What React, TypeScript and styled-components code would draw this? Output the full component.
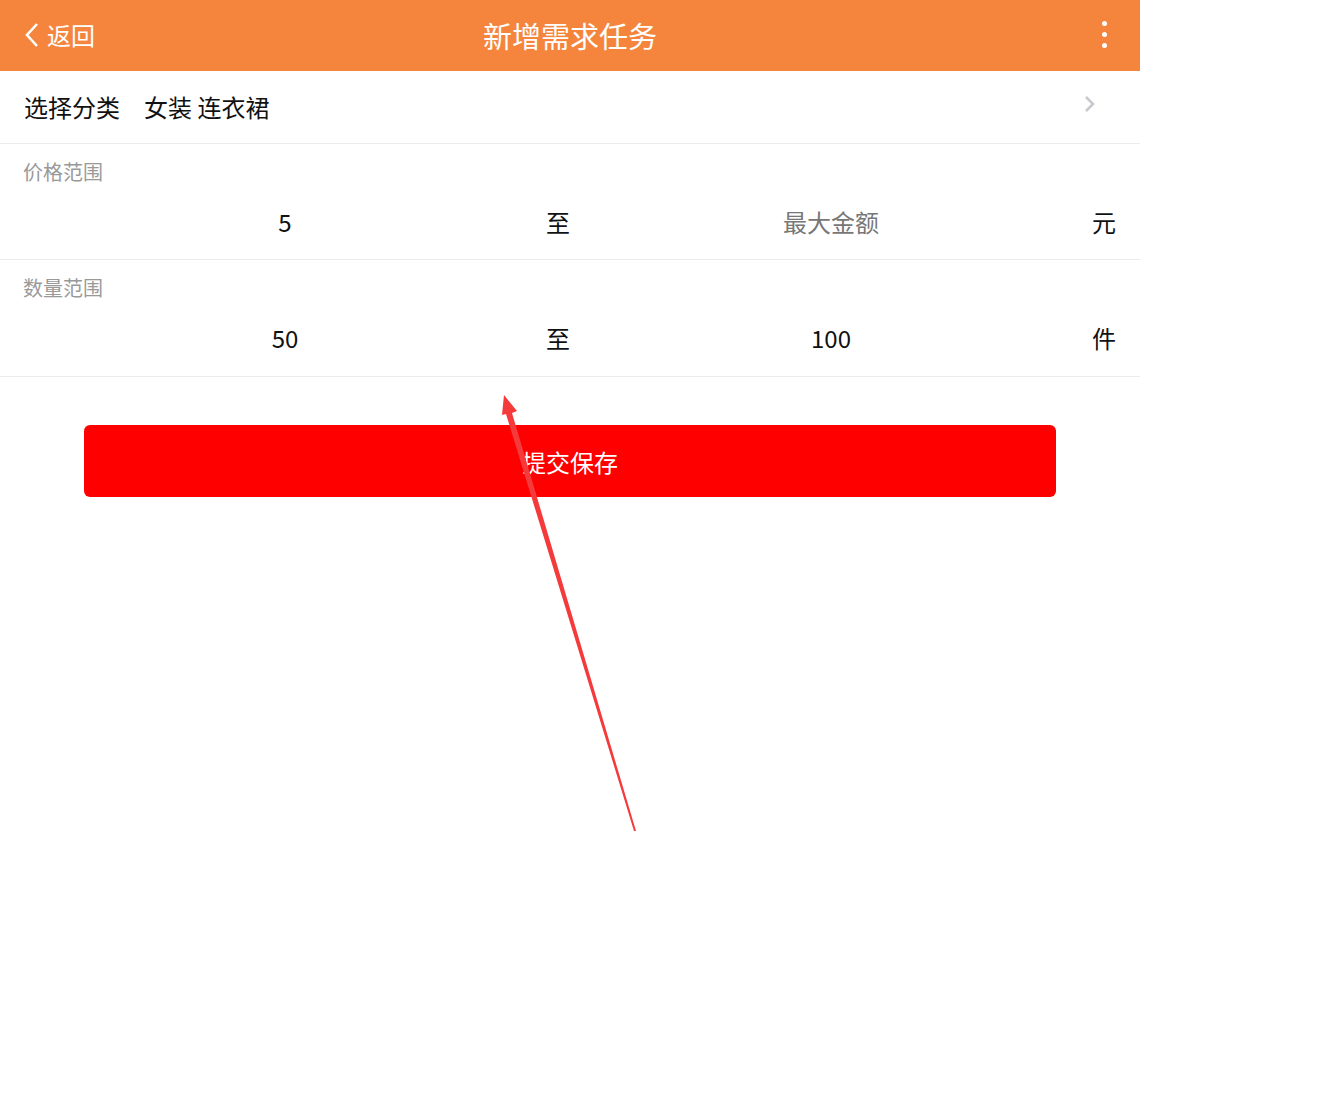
import styled, { createGlobalStyle } from "styled-components";

const Global = createGlobalStyle`
    html, body {
        margin: 0;
        padding: 0;
        background: #fff;
    }
    body {
        font-family: "Noto Sans CJK SC", "Noto Sans", sans-serif;
        color: #111;
    }
    * { box-sizing: border-box; }
`

const Page = styled.div`
    position: relative;
    width: 1328px;
    height: 1097px;
    background: #fff;
`

const Phone = styled.div`
    width: 1140px;
    background: #fff;
`

const Header = styled.header`
    display: flex;
    align-items: center;
    justify-content: space-between;
    height: 71px;
    padding: 0 24px 2px;
    background-color: #f5853d;
    color: #fff;
`

const Back = styled.div`
    display: flex;
    align-items: center;
    gap: 7px;
    width: 140px;
    font-size: 24px;
    svg { margin-top: 1px; }
`

const Title = styled.h1`
    margin: 0;
    font-size: 29px;
    font-weight: 400;
    letter-spacing: 0;
`

const More = styled.div`
    display: flex;
    flex-direction: column;
    align-items: flex-end;
    gap: 6px;
    width: 140px;
    padding-right: 9px;
`

const Dot = styled.span`
    display: block;
    width: 5px;
    height: 5px;
    border-radius: 50%;
    background: #fff;
`

const CategoryRow = styled.div`
    display: flex;
    align-items: center;
    height: 73px;
    padding: 0 24px 2px;
    border-bottom: 1px solid #ebebeb;
    font-size: 24px;
`

const RowLabel = styled.span`
    margin-right: 24px;
`

const RowValue = styled.span`
    flex: 1;
`

const Section = styled.div<{ $extra?: number }>`
    padding-top: 15px;
    padding-bottom: ${p => p.$extra ?? 0}px;
    border-bottom: 1px solid #ebebeb;
`

const SectionLabel = styled.div`
    padding: 0 23px;
    height: 26px;
    line-height: 26px;
    font-size: 20px;
    color: #999;
`

const RangeRow = styled.div`
    display: flex;
    align-items: center;
    height: 74px;
    padding: 0 24px 2px;
    font-size: 24px;
`

const RangeInput = styled.span<{ $placeholder?: boolean }>`
    flex: 1;
    text-align: center;
    color: ${p => (p.$placeholder ? "#777" : "#111")};
`

const Sep = styled.span`
    width: 24px;
    text-align: center;
`

const SubmitWrap = styled.div`
    padding: 48px 84px 0;
`

const Submit = styled.button`
    all: unset;
    display: flex;
    justify-content: center;
    align-items: center;
    width: 100%;
    height: 72px;
    border-radius: 6px;
    background: #ff0000;
    color: #fff;
    font-size: 24px;
    cursor: pointer;
`

const Annotation = styled.svg`
    position: absolute;
    left: 0;
    top: 0;
    pointer-events: none;
`

function RangeSection({ label, from, to, unit, extra }: { label: string; from: string; to: string; unit: string; extra?: number }) {
    return (
        <Section $extra={extra}>
            <SectionLabel>{label}</SectionLabel>
            <RangeRow>
                <RangeInput>{from}</RangeInput>
                <Sep>至</Sep>
                <RangeInput $placeholder={to === "最大金额"}>{to}</RangeInput>
                <Sep>{unit}</Sep>
            </RangeRow>
        </Section>
    )
}

export default function App() {
    return (
        <Page>
            <Global />
            <Phone>
                <Header>
                    <Back>
                        <svg width="16" height="26" viewBox="0 0 16 26">
                            <path d="M13 2 L3 13 L13 24" fill="none" stroke="#fff" strokeWidth="2.6" />
                        </svg>
                        <span>返回</span>
                    </Back>
                    <Title>新增需求任务</Title>
                    <More>
                        <Dot />
                        <Dot />
                        <Dot />
                    </More>
                </Header>
                <CategoryRow>
                    <RowLabel>选择分类</RowLabel>
                    <RowValue>女装 连衣裙</RowValue>
                    <svg width="12" height="18" viewBox="0 0 12 18" style={{ marginRight: 20, marginTop: -4 }}>
                        <path d="M2 2 L9 9 L2 16" fill="none" stroke="#c8c8cd" strokeWidth="2.6" />
                    </svg>
                </CategoryRow>
                <RangeSection label="价格范围" from="5" to="最大金额" unit="元" />
                <RangeSection label="数量范围" from="50" to="100" unit="件" extra={1} />
                <SubmitWrap>
                    <Submit>提交保存</Submit>
                </SubmitWrap>
            </Phone>
            <Annotation width="1328" height="1097" viewBox="0 0 1328 1097">
                <polygon points="504,395 517,411 512,413 636,831 634,831 506,414 502,415" fill="#f43a3a" />
            </Annotation>
        </Page>
    )
}
